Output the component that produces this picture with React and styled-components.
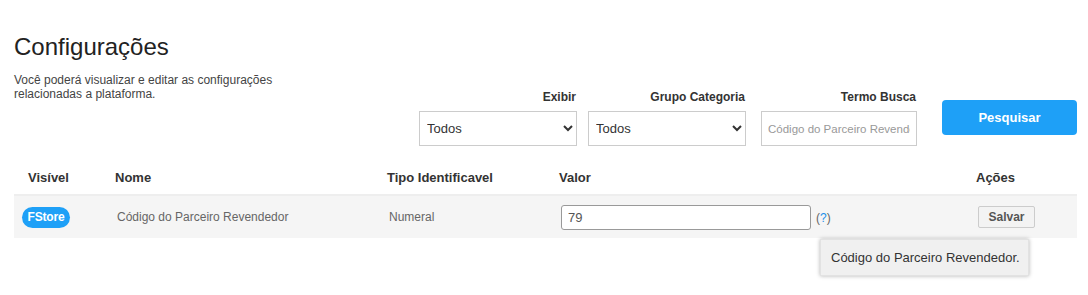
import React from "react";
import styled, { createGlobalStyle } from "styled-components";

const GlobalStyle = createGlobalStyle`
  html, body { margin: 0; padding: 0; background: #fff; }
  body { font-family: "Liberation Sans", Arial, sans-serif; color: #333; }
  * { box-sizing: border-box; }
`;

const Page = styled.div`
  min-height: 295px;
  padding: 33px 11px 0 14px;
`;

const Title = styled.h1`
  margin: 0;
  font-size: 24px;
  line-height: 28px;
  font-weight: 400;
  color: #222;
`;

const TopRow = styled.div`
  display: flex;
  align-items: flex-start;
  margin-top: 12px;
`;

const Description = styled.p`
  flex: 1;
  margin: 0;
  font-size: 12px;
  line-height: 14px;
  color: #444;
`;

const Filters = styled.div`
  display: flex;
  align-items: flex-start;
  margin-top: 17px;
`;

const Field = styled.label`
  display: flex;
  flex-direction: column;
  align-items: flex-end;
  margin-left: ${(p) => p.$gap}px;
`;

const FieldLabel = styled.span`
  font-size: 12px;
  line-height: 14px;
  font-weight: 700;
  color: #333;
  margin-bottom: 7px;
  padding-right: 1px;
`;

const Select = styled.select`
  width: ${(p) => p.$w}px;
  height: 35px;
  border: 1px solid #ccc;
  border-radius: 0;
  background: #fff;
  font-family: "Liberation Sans", Arial, sans-serif;
  font-size: 13px;
  color: #333;
  padding: 0 4px 0 3px;
  outline: none;
`;

const TextInput = styled.input`
  width: ${(p) => p.$w}px;
  height: ${(p) => p.$h}px;
  border: 1px solid ${(p) => p.$border};
  border-radius: ${(p) => p.$radius}px;
  background: #fff;
  font-family: "Liberation Sans", Arial, sans-serif;
  font-size: ${(p) => p.$fs}px;
  color: #555;
  padding: 0 6px;
  outline: none;
  &::placeholder { color: #999; }
`;

const SearchButton = styled.button`
  margin-left: 25px;
  margin-top: 10px;
  width: 135px;
  height: 35px;
  border: none;
  border-radius: 4px;
  background: #1ea0f7;
  color: #fff;
  font-family: "Liberation Sans", Arial, sans-serif;
  font-size: 13px;
  font-weight: 700;
  cursor: pointer;
`;

const Table = styled.div`
  margin-top: 14px;
  display: grid;
  grid-template-columns: 93px 272px 172px 417px 1fr;
`;

const HeadCell = styled.div`
  height: 36px;
  display: flex;
  align-items: center;
  padding-left: ${(p) => p.$pad ?? 8}px;
  font-size: 13px;
  line-height: 15px;
  font-weight: 700;
  color: #333;
  border-bottom: 2px solid #eeeeee;
`;

const Cell = styled.div`
  height: 42px;
  display: flex;
  align-items: center;
  padding-left: ${(p) => p.$pad ?? 10}px;
  background: #f5f5f5;
  font-size: 12px;
  color: #666;
`;

const Badge = styled.span`
  display: inline-flex;
  align-items: center;
  justify-content: center;
  width: 48px;
  height: 21px;
  border-radius: 11px;
  background: #1ea0f7;
  color: #fff;
  font-size: 12px;
  font-weight: 700;
  letter-spacing: -0.2px;
`;

const Help = styled.span`
  position: relative;
  margin-left: 5px;
  font-size: 12px;
  line-height: 14px;
  color: #666;
  top: 1px;
`;

const HelpMark = styled.span`
  color: #1e90e8;
`;

const Tooltip = styled.div`
  position: absolute;
  top: 28px;
  left: 4px;
  width: 209px;
  height: 37px;
  display: flex;
  align-items: center;
  padding-left: 10px;
  background: #f0f0f0;
  border: 1px solid #e2e2e2;
  box-shadow: 0 0 4px rgba(0, 0, 0, 0.3);
  font-size: 13px;
  color: #333;
  white-space: nowrap;
  z-index: 2;
`;

const SaveButton = styled.button`
  width: 57px;
  height: 22px;
  border: 1px solid #ccc;
  border-radius: 2px;
  background: #f3f3f3;
  font-family: "Liberation Sans", Arial, sans-serif;
  font-size: 12px;
  font-weight: 700;
  color: #555;
  padding: 0;
`;

export default function App() {
  return (
    <Page>
      <GlobalStyle />
      <Title>Configurações</Title>
      <TopRow>
        <Description>
          Você poderá visualizar e editar as configurações
          <br />
          relacionadas a plataforma.
        </Description>
        <Filters>
          <Field $gap={0}>
            <FieldLabel>Exibir</FieldLabel>
            <Select $w={158} defaultValue="todos">
              <option value="todos">Todos</option>
            </Select>
          </Field>
          <Field $gap={11}>
            <FieldLabel>Grupo Categoria</FieldLabel>
            <Select $w={158} defaultValue="todos">
              <option value="todos">Todos</option>
            </Select>
          </Field>
          <Field $gap={15}>
            <FieldLabel>Termo Busca</FieldLabel>
            <TextInput
              $w={156}
              $h={35}
              $border="#ccc"
              $radius={0}
              $fs={11.5}
              placeholder="Código do Parceiro Revendedor"
            />
          </Field>
          <SearchButton>Pesquisar</SearchButton>
        </Filters>
      </TopRow>
      <Table>
        <HeadCell $pad={14}>Visível</HeadCell>
        <HeadCell>Nome</HeadCell>
        <HeadCell>Tipo Identificavel</HeadCell>
        <HeadCell>Valor</HeadCell>
        <HeadCell>Ações</HeadCell>

        <Cell $pad={8}>
          <Badge>FStore</Badge>
        </Cell>
        <Cell>Código do Parceiro Revendedor</Cell>
        <Cell>Numeral</Cell>
        <Cell>
          <TextInput
            $w={250}
            $h={25}
            $border="#999"
            $radius={3}
            $fs={13}
            defaultValue="79"
          />
          <Help>
            (<HelpMark>?</HelpMark>)
            <Tooltip>Código do Parceiro Revendedor.</Tooltip>
          </Help>
        </Cell>
        <Cell>
          <SaveButton>Salvar</SaveButton>
        </Cell>
      </Table>
    </Page>
  );
}
